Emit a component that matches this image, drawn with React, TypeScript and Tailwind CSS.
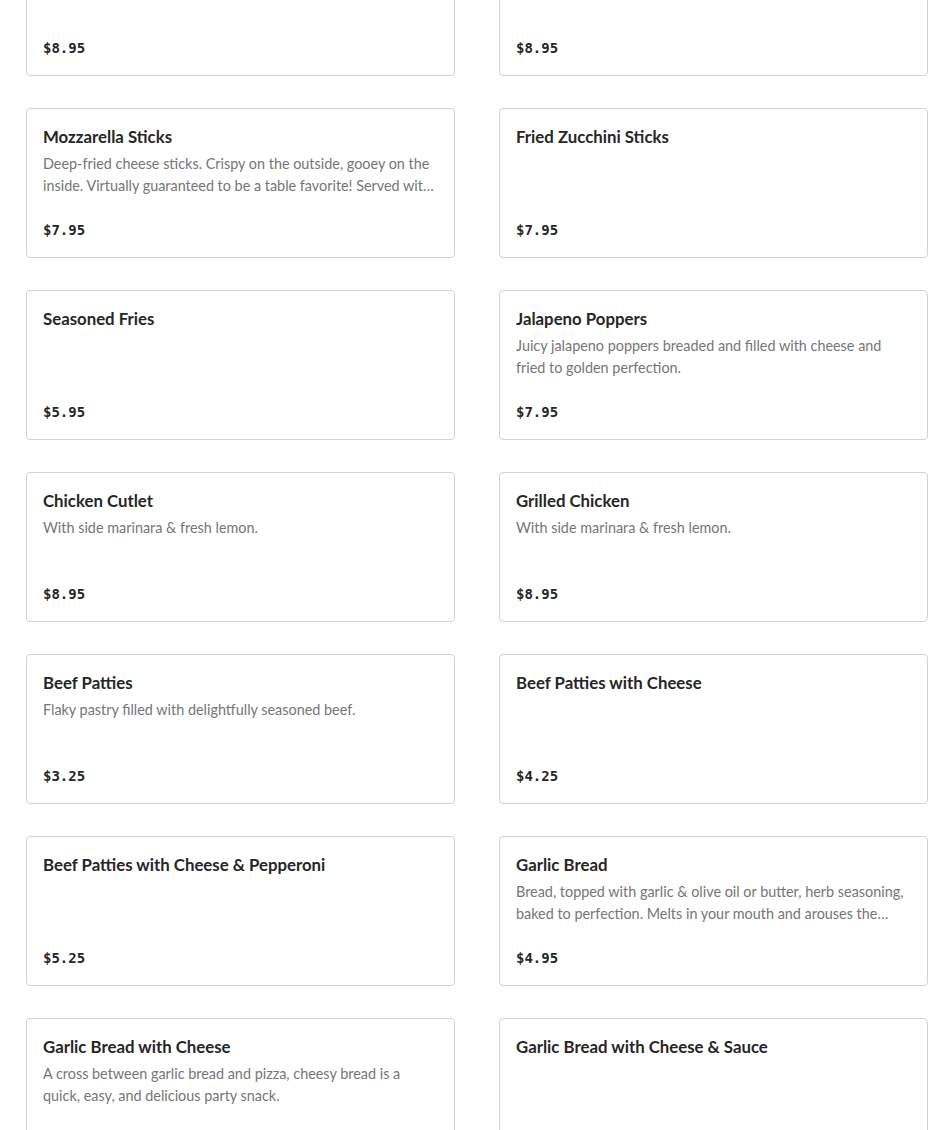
import React from "react";

type Item = { name: string; desc?: string; price: string };

const items: Item[] = [
  { name: "Buffalo Wings", desc: "", price: "$8.95" },
  { name: "Chicken Fingers", desc: "", price: "$8.95" },
  {
    name: "Mozzarella Sticks",
    desc: "Deep-fried cheese sticks. Crispy on the outside, gooey on the inside. Virtually guaranteed to be a table favorite! Served with marinara sauce.",
    price: "$7.95",
  },
  { name: "Fried Zucchini Sticks", price: "$7.95" },
  { name: "Seasoned Fries", price: "$5.95" },
  {
    name: "Jalapeno Poppers",
    desc: "Juicy jalapeno poppers breaded and filled with cheese and fried to golden perfection.",
    price: "$7.95",
  },
  { name: "Chicken Cutlet", desc: "With side marinara & fresh lemon.", price: "$8.95" },
  { name: "Grilled Chicken", desc: "With side marinara & fresh lemon.", price: "$8.95" },
  { name: "Beef Patties", desc: "Flaky pastry filled with delightfully seasoned beef.", price: "$3.25" },
  { name: "Beef Patties with Cheese", price: "$4.25" },
  { name: "Beef Patties with Cheese & Pepperoni", price: "$5.25" },
  {
    name: "Garlic Bread",
    desc: "Bread, topped with garlic & olive oil or butter, herb seasoning, baked to perfection. Melts in your mouth and arouses the senses.",
    price: "$4.95",
  },
  {
    name: "Garlic Bread with Cheese",
    desc: "A cross between garlic bread and pizza, cheesy bread is a quick, easy, and delicious party snack.",
    price: "$5.95",
  },
  { name: "Garlic Bread with Cheese & Sauce", price: "$6.95" },
];

function Card({ item }: { item: Item }) {
  return (
    <div className="flex h-[150px] flex-col rounded-[4px] border border-[#d2d2d2] bg-white px-4 pt-4 pb-4">
      <div className="truncate text-[16.8px] font-bold leading-6 text-[#262626]">{item.name}</div>
      <div className="mt-[4px] h-[44px] overflow-hidden text-[14.4px] leading-[22px] text-[#767676] line-clamp-2">
        {item.desc}
      </div>
      <div
        className="mt-[23px] text-[14px] font-bold leading-5 text-[#262626]"
        style={{ fontFamily: '"DejaVu Sans Mono", "Liberation Mono", monospace' }}
      >
        {item.price}
      </div>
    </div>
  );
}

export default function App() {
  return (
    <div
      className="h-[1130px] w-[950px] overflow-hidden bg-white"
      style={{ fontFamily: 'Lato, "Noto Sans", "Liberation Sans", sans-serif' }}
    >
      <div className="-mt-[74px] grid grid-cols-[429px_429px] gap-x-[44px] gap-y-[32px] pl-[26px]">
        {items.map((it, i) => (
          <Card key={i} item={it} />
        ))}
      </div>
    </div>
  );
}
